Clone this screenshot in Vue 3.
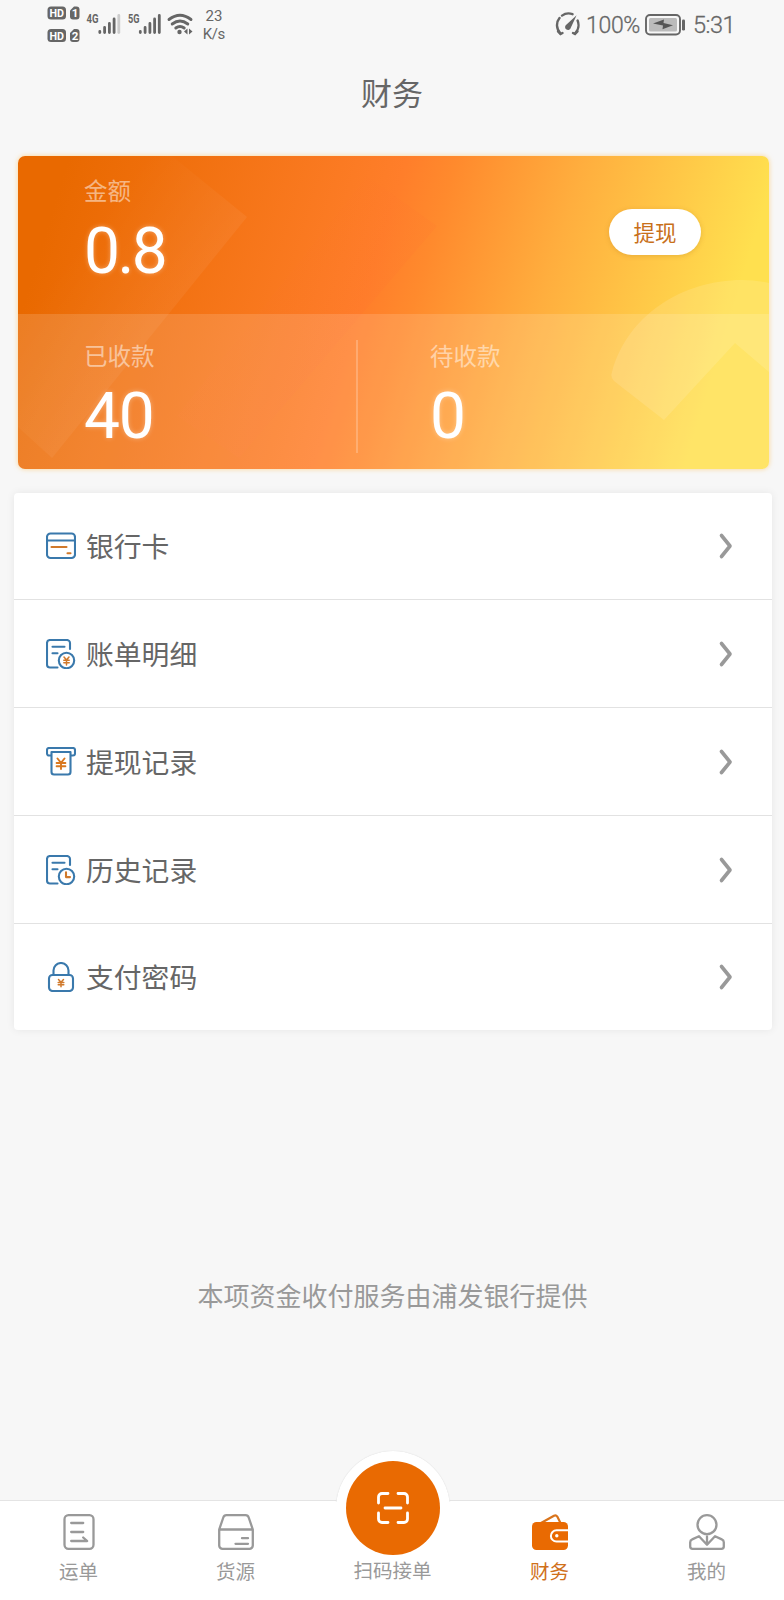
<template>
  <div class="page">
    <!-- 状态栏 -->
    <div class="status">
      <svg class="status-left" width="190" height="48" viewBox="0 0 190 48">
        <g fill="#666">
          <rect x="1.500" y="6.500" width="18.500" height="13" rx="3.500" />
          <path d="M24 10.500l4-4h2.500a3 3 0 0 1 3 3v7a3 3 0 0 1-3 3H27a3 3 0 0 1-3-3z" />
          <rect x="1.500" y="29" width="18.500" height="13" rx="3.500" />
          <path d="M24 33l4-4h2.500a3 3 0 0 1 3 3v7a3 3 0 0 1-3 3H27a3 3 0 0 1-3-3z" />
        </g>
        <g fill="#fff" class="badge-text">
          <text x="3.500" y="17.300" textLength="14.500" lengthAdjust="spacingAndGlyphs">HD</text>
          <text x="25.700" y="17.300">1</text>
          <text x="3.500" y="39.800" textLength="14.500" lengthAdjust="spacingAndGlyphs">HD</text>
          <text x="25.700" y="39.800">2</text>
        </g>
        <g fill="#666" class="net-text">
          <text x="40.500" y="23" textLength="12" lengthAdjust="spacingAndGlyphs">4G</text>
          <text x="82" y="23" textLength="11.500" lengthAdjust="spacingAndGlyphs">5G</text>
        </g>
        <g stroke="#666" stroke-width="2.800" stroke-linecap="round">
          <path d="M53.800 31.500v1M58.600 27.500v5M63.400 23.500v9M68.100 19v13.500" />
          <path d="M72.800 15.500v17" stroke="#ccc" />
          <path d="M94.300 31.500v1M99.100 27.500v5M103.900 23.500v9M108.600 19v13.500M113.300 15.500v17" />
        </g>
        <g fill="none" stroke="#666" stroke-width="2.900" stroke-linecap="round">
          <path d="M123 19.500q11-8.500 22 0M126.200 24q7.800-6 15.600 0M129.800 28q4.200-3.200 8.400 0" />
        </g>
        <circle cx="133.500" cy="32" r="2.200" fill="#666" />
        <path d="M138 31.500l3.500-3v6zM146.500 31.500l-3.500-3v6z" fill="#666" />
        <g fill="#666" class="speed-text" text-anchor="middle">
          <text x="168" y="21">23</text>
          <text x="168" y="38.500" textLength="22.500">K/s</text>
        </g>
      </svg>
      <div class="status-right">
        <svg width="26" height="26" viewBox="0 0 26 26">
          <g fill="none" stroke="#666" stroke-width="2.400" stroke-linecap="round">
            <path d="M5.500 21.500C1.300 17.500.8 10.500 4.500 6M7 3.600c3.200-2.300 7-2.800 10.500-1.400M22.600 8.500c1.800 4.500.8 9.800-2.600 13" />
            <path d="M3 19.500l2.500 2.500 2-1M22.500 19.500l-2.500 2.500-2-1" />
          </g>
          <path d="M21.600 3.200l-5.800 12.600a2.900 2.900 0 1 1-4.800-2.800z" fill="#666" />
        </svg>
        <span class="percent">100%</span>
        <svg class="battery" width="41" height="22" viewBox="0 0 41 22">
          <rect x="1" y="1" width="34" height="19.500" rx="4" fill="none" stroke="#666" stroke-width="1.900" />
          <rect x="4" y="4" width="28" height="13.500" rx="1.500" fill="#bbb" />
          <path d="M8 9.500l11-4-.5 3.500 9.500 2.200-10.500 4 .5-3.800z" fill="#555" />
          <rect x="37" y="5.500" width="3" height="11" rx="1.300" fill="#666" />
        </svg>
        <span class="time">5:31</span>
      </div>
    </div>

    <div class="title">财务</div>

    <!-- 金额卡片 -->
    <div class="card">
      <svg class="card-bg" width="752" height="313" viewBox="0 0 752 313">
        <defs>
          <linearGradient id="arrow" gradientUnits="userSpaceOnUse" x1="60" y1="90" x2="165" y2="170">
            <stop offset="0" stop-color="#fff" stop-opacity="0" />
            <stop offset="1" stop-color="#fff" stop-opacity="0.06" />
          </linearGradient>
          <linearGradient id="band" gradientUnits="userSpaceOnUse" x1="220" y1="100" x2="320" y2="190">
            <stop offset="0" stop-color="#ff7030" stop-opacity="0" />
            <stop offset="1" stop-color="#ff7030" stop-opacity="0.14" />
          </linearGradient>
        </defs>
        <path d="M0 270L35 302 230 61 155 0H0z" fill="url(#arrow)" />
        <path d="M160 260L222 302 420 70 350 20z" fill="url(#band)" />
        <path d="M595 216C610 160 665 124 725 124q14 0 27 3V216L718 187 647 264 597 225q-4-4-2-9z" fill="#fff" fill-opacity="0.12" />
      </svg>
      <div class="card-top">
        <div class="amount">
          <div class="label">金额</div>
          <div class="num total">0.8</div>
        </div>
        <button class="withdraw">提现</button>
      </div>
      <div class="card-bottom">
        <div class="amount received">
          <div class="label">已收款</div>
          <div class="num">40</div>
        </div>
        <div class="amount pending">
          <div class="label">待收款</div>
          <div class="num">0</div>
        </div>
      </div>
    </div>

    <!-- 菜单 -->
    <div class="list">
      <div v-for="item in menus" :key="item.icon" class="row">
        <svg class="row-icon" width="30" height="30" viewBox="0 0 30 30" fill="none" stroke="#3a79ac" stroke-width="2.100" stroke-linecap="round" stroke-linejoin="round">
          <template v-if="item.icon === 'card'">
            <rect x="1" y="2.500" width="28" height="24.500" rx="3.500" />
            <path d="M1 9.500h28" />
            <path d="M5.500 16h15M21.500 22.200h3" stroke="#d0792b" />
          </template>
          <template v-else-if="item.icon === 'bill' || item.icon === 'history'">
            <path d="M24 10V4a3 3 0 0 0-3-3H4a3 3 0 0 0-3 3v21.500a3 3 0 0 0 3 3h7.500" />
            <path d="M6.500 7.800h12M6.500 14.200h5" />
            <circle cx="20.500" cy="21.500" r="7.700" />
            <path v-if="item.icon === 'bill'" d="M18 18l2.500 3 2.500-3M20.500 21v5M17.800 21.300h5.400M17.800 23.700h5.400" stroke="#d0792b" stroke-width="1.500" />
            <path v-else d="M20 17.200v4.900h4" stroke="#d0792b" />
          </template>
          <template v-else-if="item.icon === 'withdraw'">
            <path d="M5 8.500H3a2 2 0 0 1-2-2V3a2 2 0 0 1 2-2h24a2 2 0 0 1 2 2v3.500a2 2 0 0 1-2 2h-2" />
            <path d="M5.500 5h19M5.500 5v20a2.500 2.500 0 0 0 2.500 2.500h14a2.500 2.500 0 0 0 2.500-2.500V5" />
            <path d="M11.500 11.500l3.500 4.300 3.500-4.300M15 16v6M10.600 16h8.800M10.600 19.200h8.800" stroke="#d9781f" stroke-width="1.900" />
          </template>
          <template v-else>
            <rect x="3" y="13" width="24" height="16" rx="3.500" />
            <path d="M7.500 13V8.500a7.500 7.500 0 0 1 15 0V13" />
            <path d="M12.500 17.500l2.500 2.800 2.500-2.800M15 20.300v4.400M12.200 20.500h5.600M12.200 22.700h5.600" stroke="#d0792b" stroke-width="1.500" />
          </template>
        </svg>
        <span class="row-text">{{ item.text }}</span>
        <svg class="chevron" width="16" height="28" viewBox="0 0 16 28">
          <path d="M3.500 3.500L12 14 3.500 24.500" fill="none" stroke="#999" stroke-width="3.600" stroke-linecap="round" stroke-linejoin="round" />
        </svg>
      </div>
    </div>

    <div class="tip">本项资金收付服务由浦发银行提供</div>

    <!-- 底部导航 -->
    <div class="tabbar">
      <div class="tab">
        <svg width="36" height="36" viewBox="0 0 36 36" fill="none" stroke="#999" stroke-width="2.300" stroke-linecap="round" stroke-linejoin="round">
          <rect x="3.500" y="1.200" width="29" height="33.600" rx="4" />
          <path d="M10.200 9h12M10.200 18h12M10.200 27h16l-4-3.500" />
        </svg>
        <span>运单</span>
      </div>
      <div class="tab">
        <svg width="36" height="36" viewBox="0 0 36 36" fill="none" stroke="#999" stroke-width="2.300" stroke-linecap="round" stroke-linejoin="round">
          <path d="M1.200 15.500L5.300 3.500a3.300 3.300 0 0 1 3.200-2.300h19a3.300 3.300 0 0 1 3.200 2.300l4.100 12v16a3.300 3.300 0 0 1-3.300 3.300h-27a3.300 3.300 0 0 1-3.300-3.300zM1.200 15.500h33.600" />
          <path d="M24 24.200h6M17.500 29.800H30" />
        </svg>
        <span>货源</span>
      </div>
      <div class="tab scan">
        <div class="scan-ring">
          <div class="scan-btn">
            <svg width="34" height="34" viewBox="0 0 34 34" fill="none" stroke="#fff" stroke-width="2.800" stroke-linecap="round">
              <path d="M2.500 12V6a3.500 3.500 0 0 1 3.500-3.500h6M22 2.500h6A3.500 3.500 0 0 1 31.500 6v6M31.500 22v6a3.500 3.500 0 0 1-3.500 3.500h-6M12 31.500H6A3.500 3.500 0 0 1 2.500 28v-6M9 17h16" />
            </svg>
          </div>
        </div>
        <span>扫码接单</span>
      </div>
      <div class="tab active">
        <svg width="36" height="36" viewBox="0 0 36 36">
          <path d="M9 9L22 1.800q2-1 3.300.8L28.500 9" fill="none" stroke="#d9741c" stroke-width="2.200" />
          <rect x="0" y="8" width="36" height="28" rx="4.500" fill="#e96a02" />
          <path d="M36 16.300H24.500a5.600 5.600 0 0 0 0 11.200H36" fill="none" stroke="#fff" stroke-width="2" />
          <circle cx="24.800" cy="21.800" r="1.700" fill="#fff" />
        </svg>
        <span>财务</span>
      </div>
      <div class="tab">
        <svg width="36" height="36" viewBox="0 0 36 36" fill="none" stroke="#999" stroke-width="2.300" stroke-linecap="round" stroke-linejoin="round">
          <circle cx="18" cy="10.700" r="9.500" />
          <path d="M10 22.200l-6.800 3.200a3 3 0 0 0-2 2.800v4.300a2.300 2.300 0 0 0 2.300 2.300h29a2.300 2.300 0 0 0 2.300-2.300v-4.300a3 3 0 0 0-2-2.800L26 22.200l-8 8.500zM18 22.500v7" />
        </svg>
        <span>我的</span>
      </div>
    </div>
  </div>
</template>

<script setup>
const menus = [
  { icon: 'card', text: '银行卡' },
  { icon: 'bill', text: '账单明细' },
  { icon: 'withdraw', text: '提现记录' },
  { icon: 'history', text: '历史记录' },
  { icon: 'password', text: '支付密码' },
]
</script>

<style>
body {
  margin: 0;
  background: #f7f7f7;
}
</style>

<style scoped>
.page {
  display: flex;
  flex-direction: column;
  width: 784px;
  height: 1600px;
  overflow: hidden;
  background: #f7f7f7;
  color: #666;
  font-family: "Noto Sans CJK SC", sans-serif;
}

.page svg {
  display: block;
  flex-shrink: 0;
}

.status {
  display: flex;
  justify-content: space-between;
  height: 48px;
  padding: 0 49px 0 46px;
  font-family: Roboto, sans-serif;
}

.badge-text {
  font: bold 11.5px Roboto, sans-serif;
}

.net-text {
  font: bold 12px Roboto, sans-serif;
}

.speed-text {
  font: 15px Roboto, sans-serif;
}

.status-right {
  display: flex;
  align-items: center;
  height: 50px;
  font-size: 23px;
}

.percent {
  width: 59px;
  margin-left: 5px;
  font-size: 23px;
  font-weight: 300;
  letter-spacing: -0.3px;
  -webkit-text-stroke: 0.3px #666;
}

.battery {
  margin-right: 7px;
}

.time {
  width: 42px;
  font-size: 23.5px;
  font-weight: 300;
  letter-spacing: -0.5px;
  -webkit-text-stroke: 0.3px #666;
}

.title {
  height: 108px;
  line-height: 88px;
  font-size: 31px;
  text-align: center;
}

.card {
  position: relative;
  flex-shrink: 0;
  width: 751px;
  height: 313px;
  margin-left: 18px;
  overflow: hidden;
  border-radius: 7px;
  color: #fff;
  background: linear-gradient(107deg, #e96900 6%, #ff7e2a 46%, #ff8a2d 52%, #ffae3e 67%, #ffe04f 90%, #ffe04f 100%);
  box-shadow: 0 0 5px rgba(255, 190, 80, 0.6);
}

.card-bg {
  position: absolute;
  left: -1px;
  top: 0;
}

.card-top,
.card-bottom {
  position: relative;
  display: flex;
  box-sizing: border-box;
}

.card-top {
  justify-content: space-between;
  height: 158px;
  padding: 19px 68px 0 66px;
}

.card-bottom {
  height: 155px;
  padding: 26px 0 0 66px;
  background: rgba(255, 255, 255, 0.14);
}

.label {
  height: 32px;
  line-height: 31px;
  font-size: 23.5px;
  opacity: 0.5;
}

.num {
  height: 76px;
  margin-top: 7px;
  line-height: 76px;
  font-family: Roboto, sans-serif;
  font-size: 64px;
  letter-spacing: -1.2px;
  text-shadow: 0 0 5px rgba(255, 255, 255, 0.35);
}

.total {
  letter-spacing: -2.5px;
}

.received {
  box-sizing: border-box;
  width: 274px;
  height: 113px;
  border-right: 2px solid rgba(255, 255, 255, 0.22);
}

.pending {
  margin-left: 72px;
}

.withdraw {
  width: 92px;
  height: 46px;
  margin-top: 34px;
  padding: 0;
  border: 0;
  border-radius: 23px;
  background: #fff;
  color: #c8701a;
  font-family: inherit;
  font-size: 21.5px;
  line-height: 46px;
  box-shadow: 0 1px 5px rgba(180, 120, 30, 0.3);
}

.list {
  flex-shrink: 0;
  width: 758px;
  margin: 24px 0 0 14px;
  border-radius: 4px;
  background: #fff;
  box-shadow: 0 0 8px rgba(0, 0, 0, 0.07);
}

.row {
  display: flex;
  align-items: center;
  box-sizing: border-box;
  height: 108px;
  padding: 0 38px 0 32px;
  border-bottom: 1px solid #e2e2e2;
}

.row:first-child {
  height: 107px;
}

.row:last-child {
  height: 106px;
  border-bottom: 0;
}

.row-text {
  flex: 1;
  margin: -2px 0 0 10px;
  font-size: 27.8px;
  line-height: 40px;
}

.tip {
  margin-top: 245px;
  padding-left: 1px;
  color: #999;
  font-size: 26px;
  line-height: 39px;
  text-align: center;
}

.tabbar {
  display: flex;
  flex-shrink: 0;
  box-sizing: border-box;
  height: 100px;
  margin-top: auto;
  border-top: 1px solid #e4e4e4;
  background: #fff;
}

.tab {
  position: relative;
  display: flex;
  flex: 0 0 157px;
  flex-direction: column;
  align-items: center;
  padding-top: 13px;
  color: #999;
  font-size: 19.5px;
  line-height: 28px;
}

.tab span {
  margin-top: 7px;
}

.tab.active {
  color: #d0701a;
}

.tab.scan {
  padding-top: 48px;
}

/* 中间凸起的扫码按钮 */
.scan-ring {
  position: absolute;
  left: 50%;
  top: -50px;
  display: flex;
  align-items: center;
  justify-content: center;
  width: 114px;
  height: 114px;
  margin-left: -57px;
}

/* 白色外圈只露出导航栏以上的部分 */
.scan-ring::before {
  content: "";
  position: absolute;
  inset: 0;
  border-radius: 50%;
  background: #fff;
  box-shadow: 0 0 1px #ccc;
  clip-path: inset(-2px -2px 63px -2px);
}

.scan-btn {
  position: relative;
  display: flex;
  align-items: center;
  justify-content: center;
  width: 94px;
  height: 94px;
  border-radius: 50%;
  background: #e96a02;
}
</style>
